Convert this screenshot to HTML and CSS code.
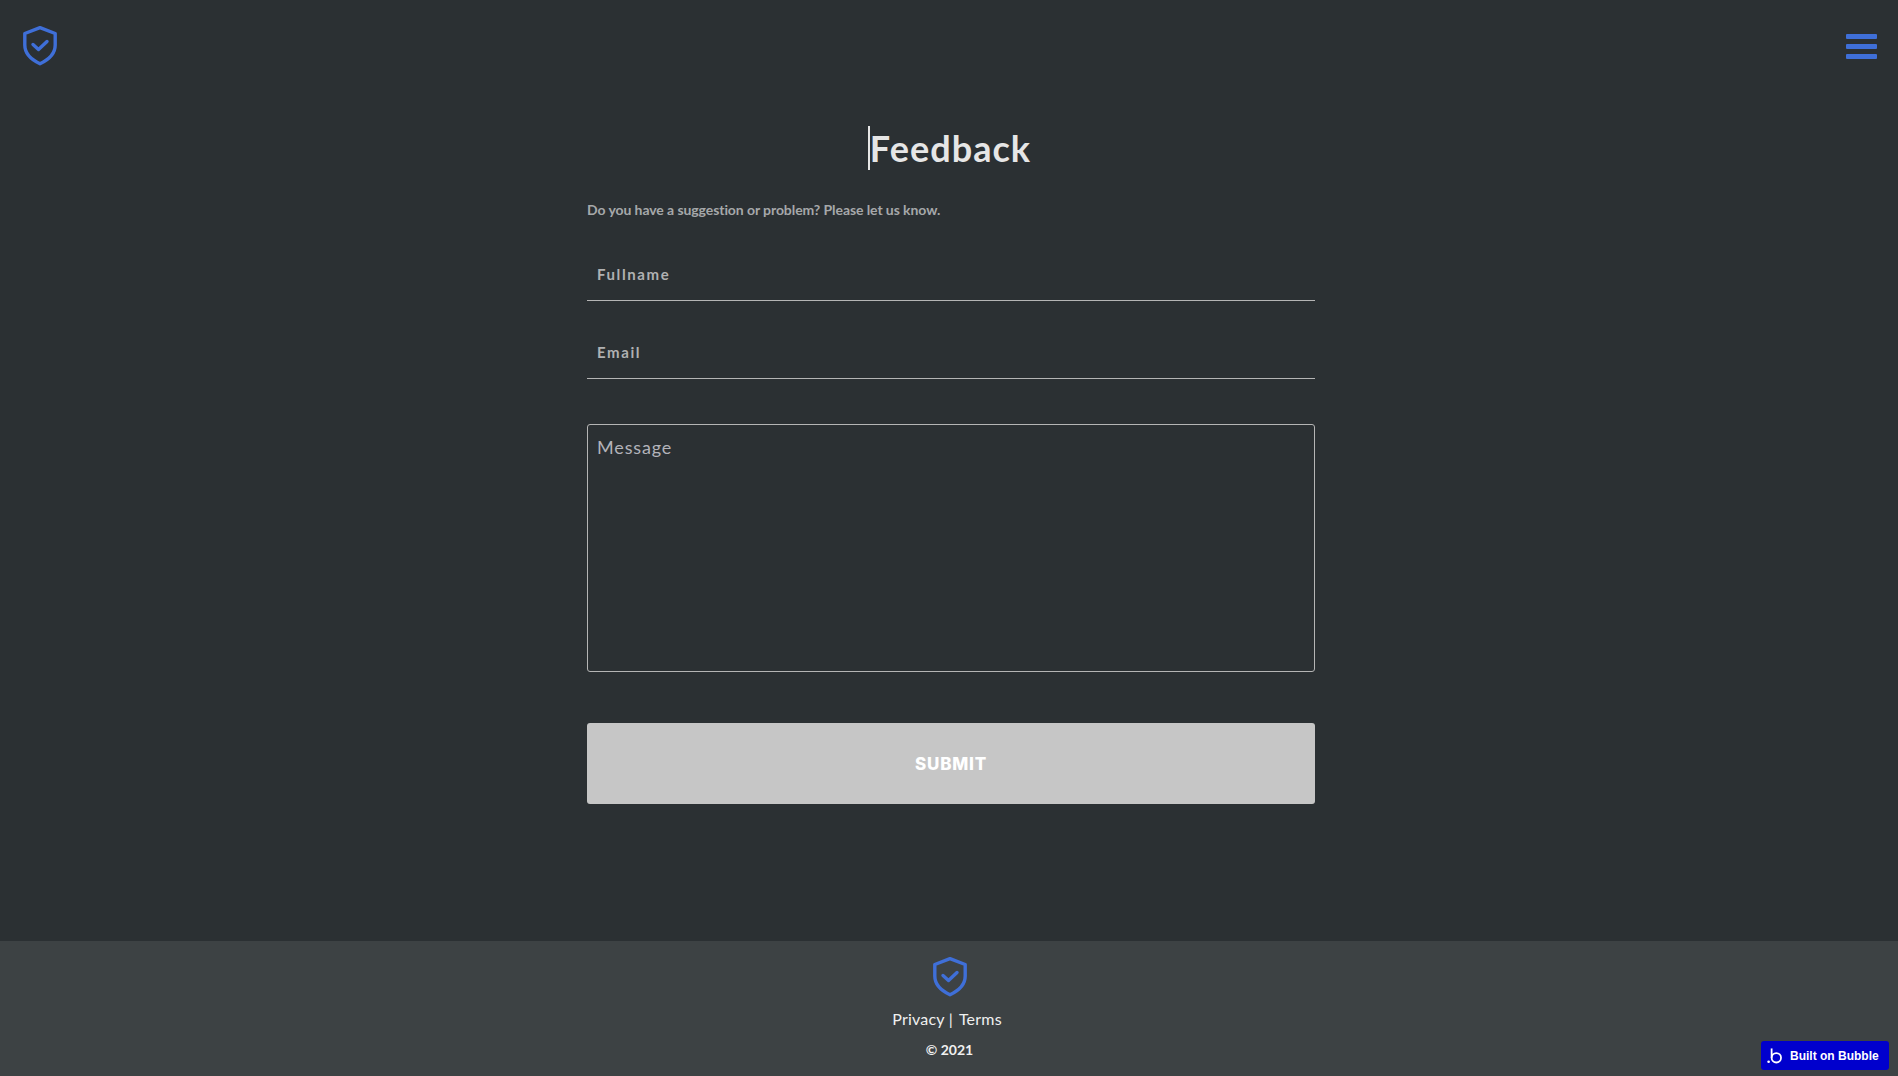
FILE: index.html

```html
<!DOCTYPE html>
<html lang="en">
<head>
<meta charset="UTF-8" />
<meta name="viewport" content="width=device-width, initial-scale=1" />
<title>Feedback</title>
<link rel="stylesheet" href="styles.css">
</head>
<body>
<header class="topBar">
  <svg class="shield" viewBox="0 0 36 40" aria-label="Logo" role="img">
    <path d="M18 1.700 L33.200 7.500 V19 C33.200 28 26 34 18 37.700 C10 34 2.800 28 2.800 19 V7.500 Z"/>
    <path d="M11 18.500 L16.500 23.500 L25 15.500"/>
  </svg>
  <button class="menuBtn" type="button" aria-label="Menu">
    <span></span><span></span><span></span>
  </button>
</header>

<main class="content">
  <h1 class="title"><span class="caret"></span>Feedback</h1>
  <form class="feedbackForm">
    <p class="intro">Do you have a suggestion or problem? Please let us know.</p>
    <input class="lineInput" type="text" placeholder="Fullname">
    <input class="lineInput" type="email" placeholder="Email">
    <textarea class="messageBox" placeholder="Message"></textarea>
    <button class="submitBtn" type="button">SUBMIT</button>
  </form>
</main>

<footer class="siteFooter">
  <svg class="shield" viewBox="0 0 36 40" aria-hidden="true">
    <path d="M18 1.700 L33.200 7.500 V19 C33.200 28 26 34 18 37.700 C10 34 2.800 28 2.800 19 V7.500 Z"/>
    <path d="M11 18.500 L16.500 23.500 L25 15.500"/>
  </svg>
  <div class="footerLinks"><a href="#">Privacy</a><span class="sep">|</span><a href="#">Terms</a></div>
  <div class="copyright">© 2021</div>
</footer>

<a class="bubbleBadge" href="#">
  <svg viewBox="0 0 18 18" aria-hidden="true">
    <circle cx="1.800" cy="15.500" r="1.500" class="dot"/>
    <circle cx="10.500" cy="11" r="5.300"/>
    <path d="M5.200 0.500 V11"/>
  </svg>
  Built on Bubble
</a>
</body>
</html>
```

FILE: styles.css

```css
* {
  box-sizing: border-box;
}

body {
  margin: 0;
  height: 100vh;
  overflow: hidden;
  display: flex;
  flex-direction: column;
  background: #2b3033;
  font-family: Lato, 'Liberation Sans', sans-serif;
  color: #e6e6e6;
}

.shield {
  width: 36px;
  height: 40px;
  fill: none;
  stroke: #3f6fd8;
  stroke-width: 3.400;
  stroke-linejoin: round;
  stroke-linecap: round;
}

.topBar {
  display: flex;
  justify-content: space-between;
  align-items: flex-start;
  padding: 26px 21px 0 22px;
  height: 100px;
}

.menuBtn {
  display: flex;
  flex-direction: column;
  gap: 5px;
  width: 31px;
  margin-top: 8px;
  padding: 0;
  background: none;
  border: none;
}
.menuBtn span {
  display: block;
  height: 5px;
  border-radius: 1px;
  background: #3f6fd8;
}

.content {
  flex: 1;
  display: flex;
  flex-direction: column;
  align-items: center;
  padding-left: 4px;
}

.title {
  margin: 26px 3px 0 0;
  height: 44px;
  line-height: 44px;
  font-size: 36px;
  font-weight: 700;
  letter-spacing: 1.05px;
  color: #e6e6e6;
  display: flex;
}
.caret {
  width: 2px;
  height: 44px;
  background: #e6e6e6;
}

.feedbackForm {
  width: 728px;
  display: flex;
  flex-direction: column;
  margin-top: 31px;
}

.intro {
  margin: 0;
  font-size: 14px;
  line-height: 17px;
  font-weight: 700;
  letter-spacing: -0.08px;
  color: #a6a8aa;
}

.lineInput {
  height: 52px;
  margin-top: 31px;
  padding: 0 10px 2px;
  background: none;
  border: none;
  border-bottom: 1px solid #b5b5b5;
  outline: none;
  font-family: inherit;
  font-size: 15px;
  font-weight: 700;
  letter-spacing: 1.6px;
}
.lineInput + .lineInput {
  margin-top: 26px;
}
.lineInput::placeholder {
  color: #b0b1b2;
  opacity: 1;
}

.messageBox {
  height: 248px;
  margin-top: 45px;
  padding: 11px 9px;
  resize: none;
  background: none;
  border: 1px solid #b5b5b5;
  border-radius: 3px;
  outline: none;
  font-family: inherit;
  font-size: 18px;
  letter-spacing: 0.85px;
}
.messageBox::placeholder {
  color: #b3b3ba;
  opacity: 1;
}

.submitBtn {
  height: 81px;
  margin-top: 51px;
  background: #c6c6c6;
  border: none;
  border-radius: 3px;
  color: #fff;
  font-family: Inter, 'Noto Sans', sans-serif;
  font-size: 17px;
  font-weight: 800;
  letter-spacing: 0.8px;
}

.siteFooter {
  height: 135px;
  display: flex;
  flex-direction: column;
  align-items: center;
  padding-top: 16px;
  padding-left: 2px;
  background: #3d4244;
}

.footerLinks {
  margin: 12px 6px 0 0;
  font-size: 16px;
  line-height: 20px;
  letter-spacing: 0.2px;
  color: #f0f0f0;
}
.footerLinks a {
  color: inherit;
  text-decoration: none;
}
.sep {
  margin: 0 6px 0 4px;
}

.copyright {
  margin: 12px 1px 0 0;
  font-size: 14px;
  line-height: 17px;
  font-weight: 700;
  color: #f0f0f0;
}

.bubbleBadge {
  position: fixed;
  right: 9px;
  bottom: 6px;
  width: 128px;
  height: 29px;
  display: flex;
  align-items: center;
  gap: 7px;
  padding-left: 6px;
  border-radius: 3px;
  background: #0000cd;
  color: #fff;
  text-decoration: none;
  font-family: 'Liberation Sans', Arial, sans-serif;
  font-size: 12px;
  font-weight: 700;
}
.bubbleBadge svg {
  width: 16px;
  height: 18px;
  fill: none;
  stroke: #fff;
  stroke-width: 2;
}
.bubbleBadge .dot {
  fill: #fff;
  stroke: none;
}
```
